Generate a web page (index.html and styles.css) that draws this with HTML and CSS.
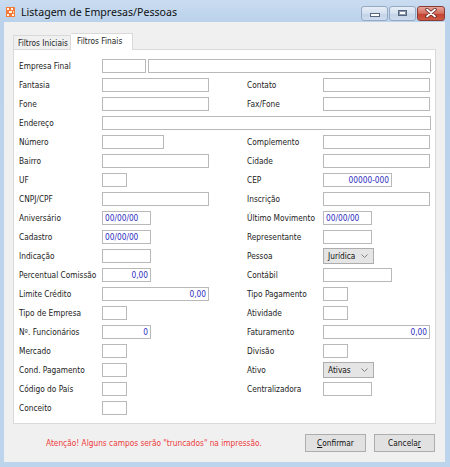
FILE: index.html
```html
<!DOCTYPE html>
<html lang="pt-BR">
<head>
  <meta charset="UTF-8" />
  <title>Listagem de Empresas/Pessoas</title>
  <link rel="stylesheet" href="styles.css">
</head>
<body>
  <div class="window">
    <div class="titlebar">
      <svg class="app-icon" width="9" height="10" viewBox="0 0 9 10">
        <rect width="9" height="10" fill="#f47a3c"/>
        <rect x="1" y="1" width="2" height="2" fill="#fff3e0"/>
        <rect x="5" y="1" width="2" height="2" fill="#fff3e0"/>
        <rect x="3" y="4" width="3" height="2" fill="#fff3e0"/>
        <rect x="1" y="7" width="2" height="2" fill="#fff3e0"/>
        <rect x="6" y="7" width="2" height="2" fill="#fff3e0"/>
        <rect x="7" y="4" width="1" height="2" fill="#ffd2a8"/>
      </svg>
      <span class="title">Listagem de Empresas/Pessoas</span>
      <div class="caption-buttons">
        <div class="cap-btn"><span class="glyph-min"></span></div>
        <div class="cap-btn"><span class="glyph-max"></span></div>
        <div class="cap-btn close">
          <svg width="12" height="10" viewBox="0 0 12 10">
            <path d="M2 1.5 L10 8.5 M10 1.5 L2 8.5" stroke="#5a2020" stroke-width="3.4" stroke-linecap="round"/>
            <path d="M2 1.5 L10 8.5 M10 1.5 L2 8.5" stroke="#ffffff" stroke-width="1.8" stroke-linecap="round"/>
          </svg>
        </div>
      </div>
    </div>

    <div class="client">
      <div class="tabs">
        <div class="tab">Filtros Iniciais</div>
        <div class="tab active">Filtros Finais</div>
      </div>

      <div class="panel">
        <div class="form">
          <label>Empresa Final</label>
          <div class="pair">
            <input class="w44" type="text">
            <input class="grow" type="text">
          </div>

          <label>Fantasia</label>
          <input class="w107" type="text">
          <label>Contato</label>
          <input class="w107" type="text">

          <label>Fone</label>
          <input class="w107" type="text">
          <label>Fax/Fone</label>
          <input class="w107" type="text">

          <label>Endereço</label>
          <input class="full" type="text">

          <label>Número</label>
          <input class="w62" type="text">
          <label>Complemento</label>
          <input class="w107" type="text">

          <label>Bairro</label>
          <input class="w107" type="text">
          <label>Cidade</label>
          <input class="w107" type="text">

          <label>UF</label>
          <input class="w25" type="text">
          <label>CEP</label>
          <input class="w69 num" type="text" value="00000-000">

          <label>CNPJ/CPF</label>
          <input class="w107" type="text">
          <label>Inscrição</label>
          <input class="w107" type="text">

          <label>Aniversário</label>
          <input class="w49 val" type="text" value="00/00/00">
          <label>Último Movimento</label>
          <input class="w49 val" type="text" value="00/00/00">

          <label>Cadastro</label>
          <input class="w49 val" type="text" value="00/00/00">
          <label>Representante</label>
          <input class="w49" type="text">

          <label>Indicação</label>
          <input class="w49" type="text">
          <label>Pessoa</label>
          <div class="combo"><span>Jurídica</span><svg width="7" height="4" viewBox="0 0 7 4"><path d="M0.5 0.5 L3.5 3.5 L6.5 0.5" fill="none" stroke="#808080"/></svg></div>

          <label>Percentual Comissão</label>
          <input class="w49 num" type="text" value="0,00">
          <label>Contábil</label>
          <input class="w69" type="text">

          <label>Limite Crédito</label>
          <input class="w107 num" type="text" value="0,00">
          <label>Tipo Pagamento</label>
          <input class="w25" type="text">

          <label>Tipo de Empresa</label>
          <input class="w25" type="text">
          <label>Atividade</label>
          <input class="w25" type="text">

          <label>Nº. Funcionários</label>
          <input class="w49 num" type="text" value="0">
          <label>Faturamento</label>
          <input class="w107 num" type="text" value="0,00">

          <label>Mercado</label>
          <input class="w25" type="text">
          <label>Divisão</label>
          <input class="w25" type="text">

          <label>Cond. Pagamento</label>
          <input class="w25" type="text">
          <label>Ativo</label>
          <div class="combo"><span>Ativas</span><svg width="7" height="4" viewBox="0 0 7 4"><path d="M0.5 0.5 L3.5 3.5 L6.5 0.5" fill="none" stroke="#808080"/></svg></div>

          <label>Código do País</label>
          <input class="w25" type="text">
          <label>Centralizadora</label>
          <input class="w49" type="text">

          <label>Conceito</label>
          <input class="w25" type="text">
        </div>
      </div>

      <div class="footer">
        <span class="warning">Atenção! Alguns campos serão "truncados" na impressão.</span>
        <div class="buttons">
          <button><u>C</u>onfirmar</button>
          <button>Cancela<u>r</u></button>
        </div>
      </div>
    </div>
  </div>
</body>
</html>
```

FILE: styles.css
```css
body {
  margin: 0;
  background: #bcd4ec;
  font-family: "DejaVu Sans Condensed", "DejaVu Sans", sans-serif;
  font-size: 8.25px;
  color: #222;
}
.window {
  width: 450px;
  height: 467px;
  display: flex;
  flex-direction: column;
  background: linear-gradient(#cadcf0, #bad2eb 22px, #bcd4ec);
}
.titlebar {
  height: 22px;
  display: flex;
  align-items: center;
  padding: 0 0 0 6px;
}
.app-icon {
  margin-top: 2px;
}
.title {
  margin-left: 6px;
  margin-top: 2px;
  font-family: "Noto Sans", sans-serif;
  font-size: 10.6px;
  color: #101010;
}
.caption-buttons {
  margin-left: auto;
  margin-right: 5px;
  margin-top: 4px;
  display: flex;
  gap: 1px;
}
.cap-btn {
  width: 25px;
  height: 13px;
  border: 1px solid #96a9c2;
  border-radius: 3px;
  background: linear-gradient(#e6eef8, #d3dfee 50%, #c4d4e8 51%, #ccdbed);
  display: flex;
  align-items: center;
  justify-content: center;
}
.cap-btn.close {
  width: 26px;
  border-color: #8a3c34;
  background: linear-gradient(#e8a89c, #d26a5c 50%, #c2402f 51%, #cf5a45);
}
.glyph-min {
  width: 8px;
  height: 2px;
  margin-top: 4px;
  background: #fff;
  border: 1px solid #55657c;
}
.glyph-max {
  width: 7px;
  height: 4px;
  background: #fff;
  border: 1px solid #55657c;
  box-shadow: inset 0 0 0 1px #8a99ae;
}

.client {
  flex: 1;
  margin: 0 5px 5px 4px;
  background: #f0f0f0;
  padding: 11px 9px 0 9px;
  display: flex;
  flex-direction: column;
}
.tabs {
  display: flex;
  align-items: flex-end;
  height: 16px;
}
.tab {
  height: 14px;
  line-height: 14px;
  border: 1px solid #d9d9d9;
  border-bottom: none;
  background: #f0f0f0;
  width: 58px;
  box-sizing: border-box;
  padding-left: 4px;
}
.tab.active {
  position: relative;
  height: 17px;
  margin-bottom: -1px;
  line-height: 15px;
  width: 62px;
  padding-left: 6px;
  background: #fff;
  border-left: none;
}

.panel {
  height: 375px;
  box-sizing: border-box;
  border: 1px solid #d9d9d9;
  background: #fff;
  padding: 6px 4px 0 5px;
}
.form {
  display: grid;
  grid-template-columns: 83px 145px 76px 108px;
  grid-auto-rows: 19px;
  align-items: center;
}
.form input {
  box-sizing: border-box;
  height: 14px;
  margin: 0;
  padding: 0 2px;
  border: 1px solid #b9b9b9;
  background: #fff;
  font-family: inherit;
  font-size: 8.25px;
  color: #2c2cbe;
  outline: none;
}
.form .num {
  text-align: right;
}
.pair {
  grid-column: 2 / 5;
  display: flex;
  gap: 2px;
}
.pair .grow {
  flex: 1;
}
.full {
  grid-column: 2 / 5;
}
.w25 { width: 25px; }
.w44 { width: 44px; }
.w49 { width: 49px; }
.w62 { width: 62px; }
.w69 { width: 69px; }
.w107 { width: 107px; }
.form input.full { width: 329px; }

.combo {
  width: 51px;
  height: 16px;
  box-sizing: border-box;
  border: 1px solid #adadad;
  background: #e5e5e5;
  display: flex;
  align-items: center;
  justify-content: space-between;
  padding: 0 5px 0 4px;
  color: #111;
}

.footer {
  margin-top: 10px;
  height: 18px;
  display: flex;
  align-items: center;
}
.warning {
  margin-left: 33px;
  color: #ee3b3b;
}
.buttons {
  margin-left: auto;
  margin-right: 1px;
  display: flex;
  gap: 8px;
}
button {
  width: 61px;
  height: 18px;
  box-sizing: border-box;
  border: 1px solid #adadad;
  background: #e1e1e1;
  font-family: inherit;
  font-size: 8.25px;
  color: #111;
  padding: 0;
}
```
